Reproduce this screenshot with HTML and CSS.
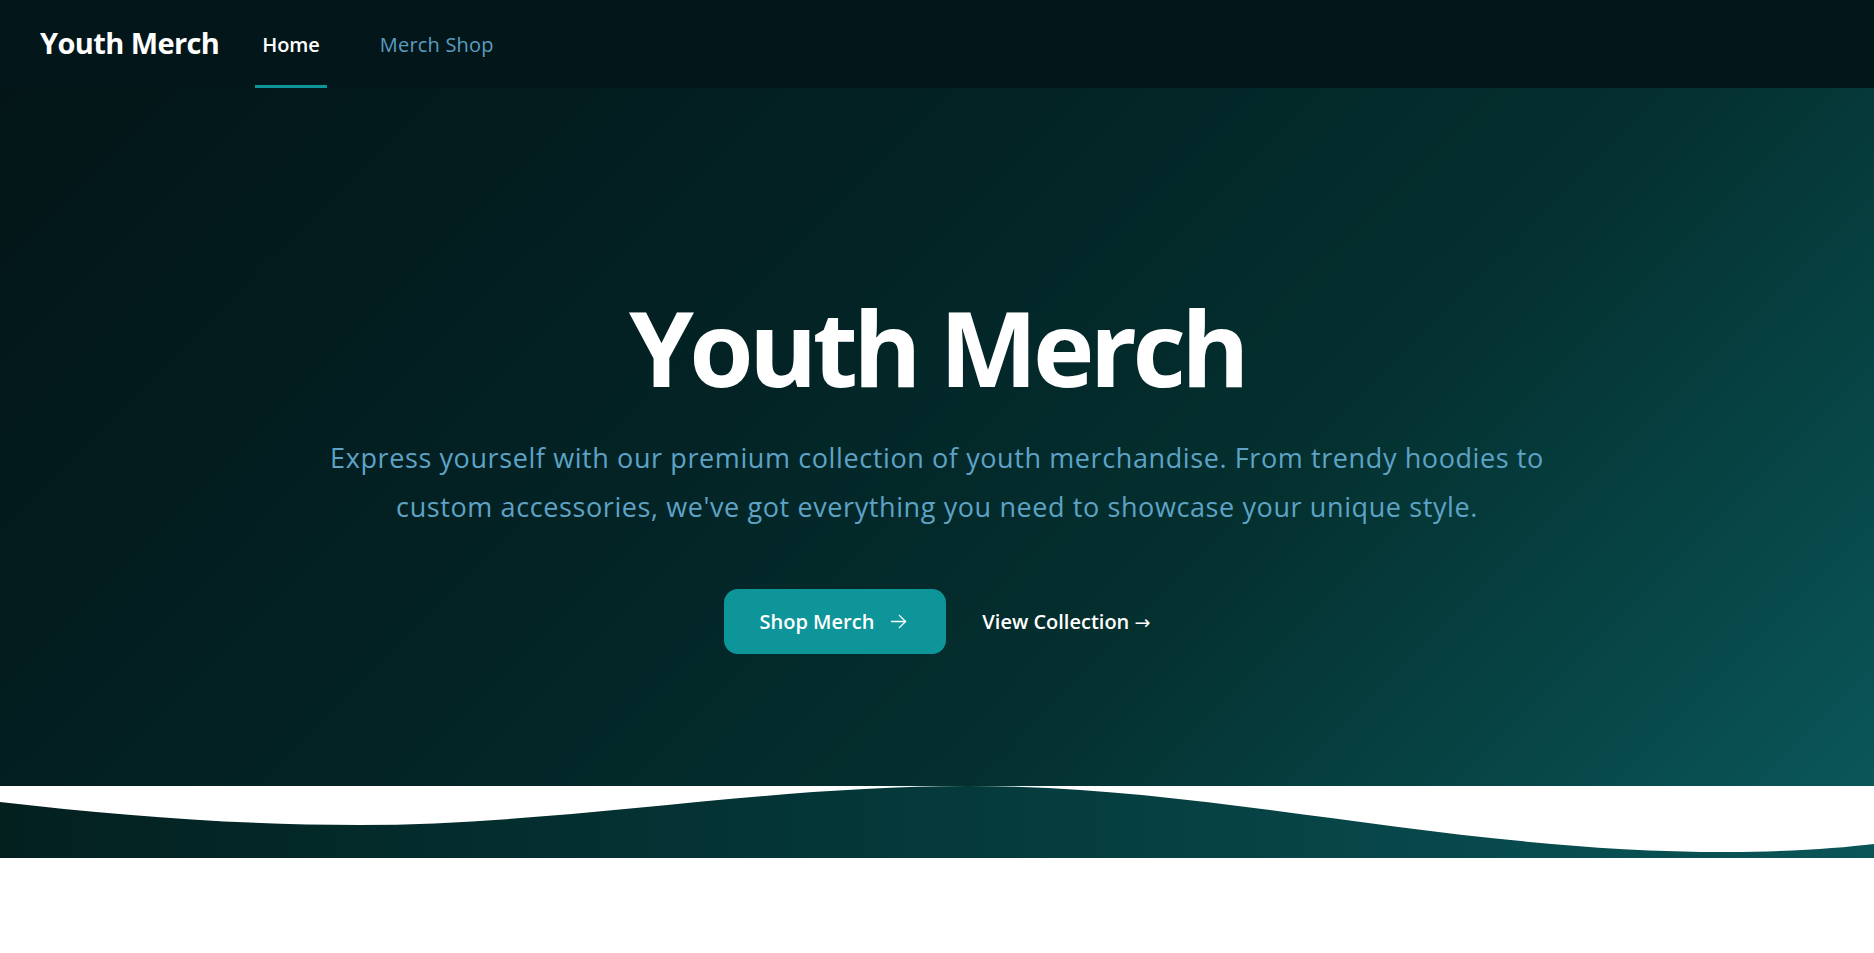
FILE: index.html
```html
<!DOCTYPE html>
<html lang="en">
<head>
<meta charset="utf-8">
<title>Youth Merch</title>
<link rel="stylesheet" href="styles.css">
</head>
<body>
<header class="topbar">
  <a class="brand" href="#">Youth Merch</a>
  <nav class="nav">
    <a class="nav-link active" href="#">Home</a>
    <a class="nav-link" href="#">Merch Shop</a>
  </nav>
</header>
<main>
  <section class="hero">
    <h1 class="hero-title">Youth Merch</h1>
    <p class="hero-text">Express yourself with our premium collection of youth merchandise. From trendy hoodies to custom accessories, we've got everything you need to showcase your unique style.</p>
    <div class="hero-actions">
      <a class="btn-primary" href="#">Shop Merch
        <svg class="btn-icon" viewBox="0 0 24 24" width="21" height="21" fill="none" stroke="currentColor" stroke-width="1.6" stroke-linecap="round" stroke-linejoin="round"><path d="M4 12h16"/><path d="M13 5l7 7-7 7"/></svg>
      </a>
      <a class="btn-link" href="#">View Collection <span class="btn-arrow">→</span></a>
    </div>
  </section>
  <div class="wave">
    <svg class="wave-svg" viewBox="0 0 1874 72" preserveAspectRatio="none">
      <defs>
        <linearGradient id="waveGrad" x1="0" y1="0" x2="1" y2="0">
          <stop offset="0" stop-color="#03201f"/>
          <stop offset="0.5" stop-color="#05393b"/>
          <stop offset="1" stop-color="#0a5558"/>
        </linearGradient>
      </defs>
      <path d="M0,16 C120,30 240,39 359,39 C560,39 760,0 968,0 C1220,0 1450,66 1727,66 C1790,66 1840,62 1874,58 L1874,72 L0,72 Z" fill="url(#waveGrad)"/>
    </svg>
  </div>
  <div class="below"></div>
</main>
</body>
</html>
```

FILE: styles.css
```css
* {
  box-sizing: border-box;
}

html, body {
  margin: 0;
  padding: 0;
  background: #ffffff;
}

body {
  font-family: "Open Sans", "Noto Sans", "Liberation Sans", sans-serif;
  color: #ffffff;
}

a {
  text-decoration: none;
  color: inherit;
}

.topbar {
  height: 88px;
  background: #03161a;
  display: flex;
  align-items: stretch;
  padding: 0 40px;
}

.brand {
  display: flex;
  align-items: center;
  font-size: 29px;
  font-weight: 700;
  letter-spacing: -0.6px;
  color: #ffffff;
  padding-bottom: 4px;
}

.nav {
  display: flex;
  align-items: stretch;
  gap: 46px;
  margin-left: 36px;
}

.nav-link {
  display: flex;
  align-items: center;
  padding: 0 7px;
  font-size: 20px;
  color: #5b9dc0;
  border-bottom: 3px solid transparent;
  padding-top: 3px;
  letter-spacing: 0.2px;
}

.nav-link.active {
  color: #ffffff;
  font-weight: 600;
  border-bottom-color: #0e959a;
  letter-spacing: -0.1px;
}

.hero {
  height: 698px;
  padding-top: 64px;
  display: flex;
  flex-direction: column;
  align-items: center;
  justify-content: center;
  background: linear-gradient(135deg, #031517 0%, #032325 40%, #04302f 65%, #0a5659 100%);
  text-align: center;
}

.hero-title {
  margin: 0;
  font-size: 104px;
  line-height: 1.22;
  font-weight: 700;
  letter-spacing: -4.6px;
  color: #ffffff;
}

.hero-text {
  margin: 22px 0 0;
  max-width: 1270px;
  font-size: 27px;
  line-height: 49px;
  color: #5ea3c6;
  letter-spacing: 0.6px;
}

.hero-actions {
  margin-top: 58px;
  display: flex;
  align-items: center;
  gap: 36px;
}

.btn-primary {
  display: flex;
  align-items: center;
  gap: 14px;
  height: 65px;
  padding: 0 37px 0 36px;
  border-radius: 14px;
  background: #0d959a;
  color: #ffffff;
  font-size: 20px;
  font-weight: 600;
  letter-spacing: 0;
}

.btn-icon {
  display: block;
}

.btn-link {
  font-size: 20px;
  font-weight: 600;
  color: #ffffff;
  letter-spacing: 0;
}

.btn-arrow {
  font-family: "DejaVu Sans", sans-serif;
  font-weight: 400;
  font-size: 19px;
}

.wave {
  height: 72px;
  background: #ffffff;
}

.wave-svg {
  display: block;
  width: 100%;
  height: 72px;
}

.below {
  height: 95px;
  background: #ffffff;
}
```
